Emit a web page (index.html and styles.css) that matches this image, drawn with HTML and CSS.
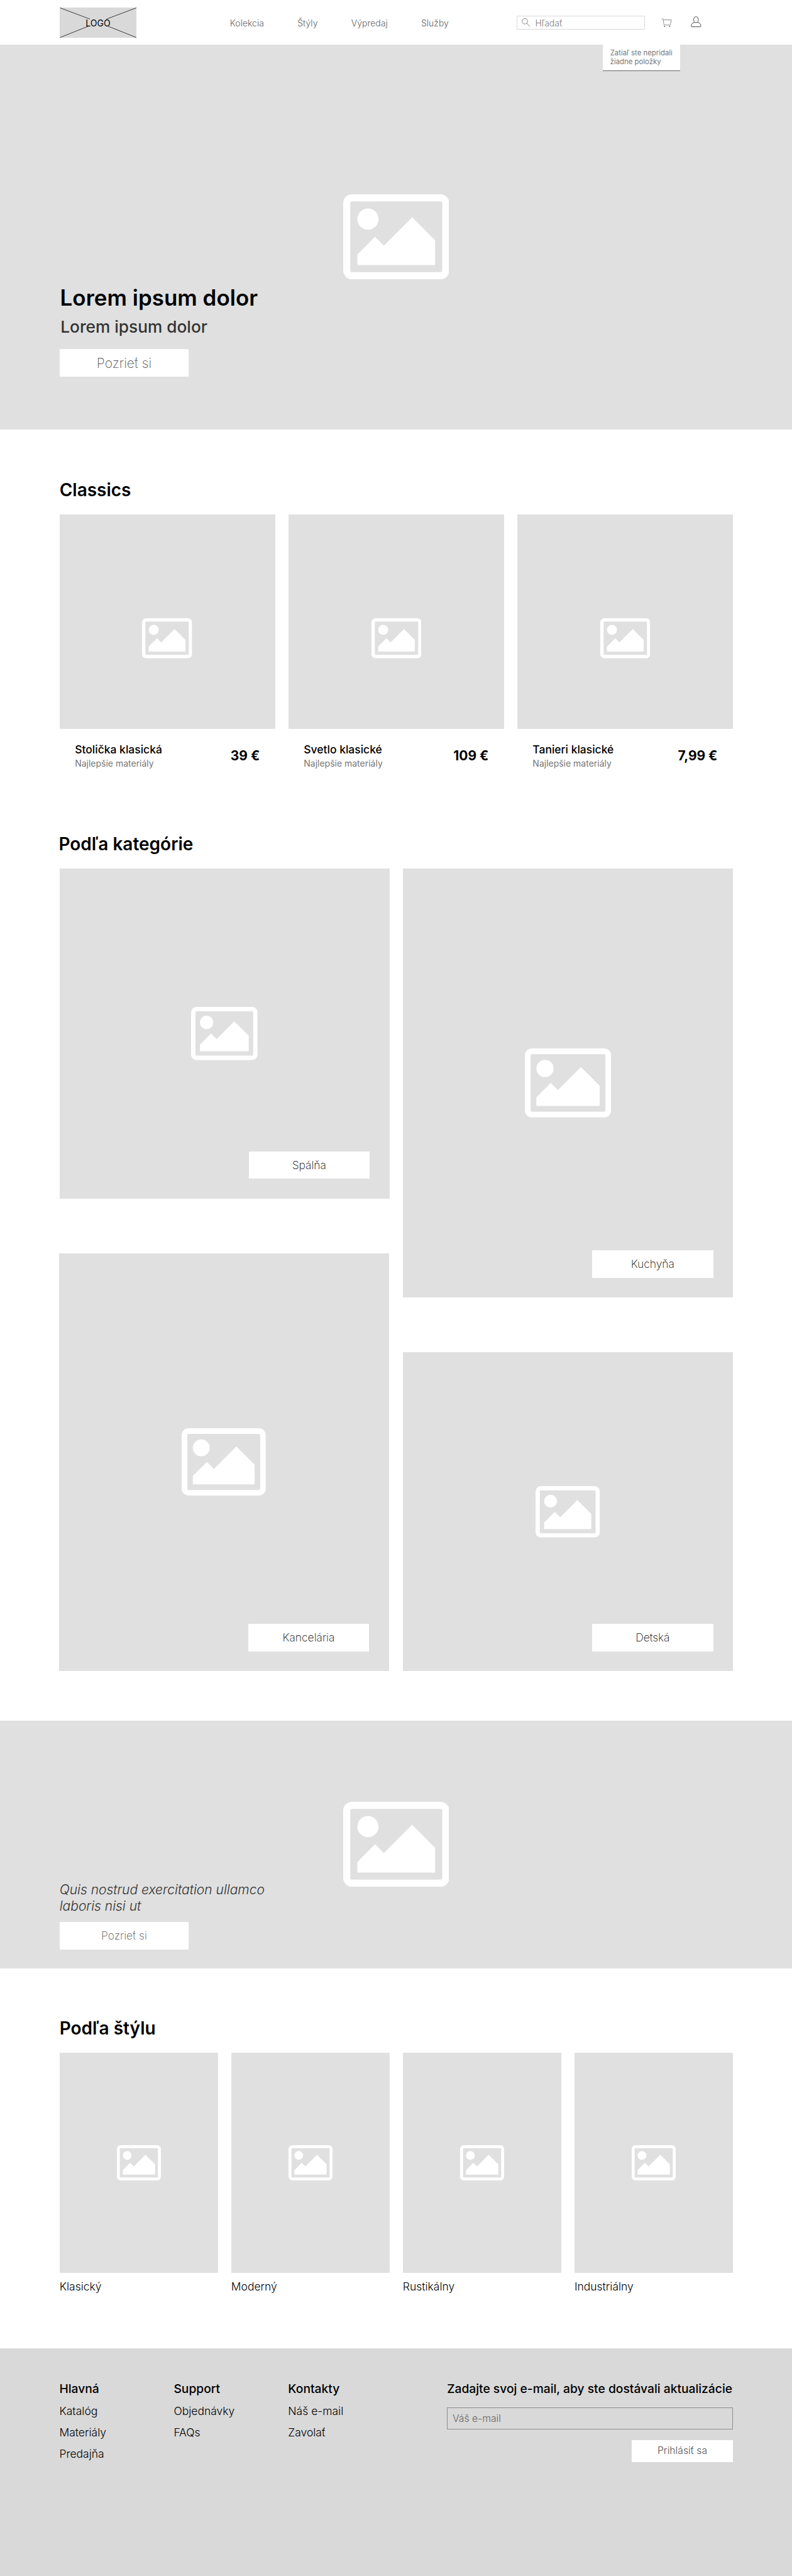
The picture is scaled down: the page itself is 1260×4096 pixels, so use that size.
FILE: index.html
```html
<!DOCTYPE html>
<html lang="sk">
<head>
<meta charset="utf-8">
<title>Lorem ipsum dolor</title>
<link rel="stylesheet" href="styles.css">
</head>
<body>
<svg class="sprite" aria-hidden="true">
  <symbol id="picture" viewBox="0 0 1920 1536">
    <path d="M640 448a192 192 0 1 1-384 0a192 192 0 1 1 384 0zM1664 832v448H256v-192l320-320l160 160l512-512z"/>
    <path fill-rule="evenodd" d="M160 0H1760a160 160 0 0 1 160 160V1376a160 160 0 0 1-160 160H160a160 160 0 0 1-160-160V160a160 160 0 0 1 160-160zM160 128a32 32 0 0 0-32 32V1376a32 32 0 0 0 32 32H1760a32 32 0 0 0 32-32V160a32 32 0 0 0-32-32z"/>
  </symbol>
</svg>

<header class="header">
  <a class="logo">
    <svg class="logo-lines" viewBox="0 0 140 55"><path d="M0.5 .5L55 21M139.500 .5L85 21M.5 54.500L52 34M139.500 54.500L88 34"/></svg>
    <span class="logo-text">LOGO</span>
  </a>
  <nav class="nav">
    <a>Kolekcia</a><a>Štýly</a><a>Výpredaj</a><a>Služby</a>
  </nav>
  <div class="search">
    <svg class="search-icon" viewBox="0 0 16 16"><circle cx="5.700" cy="5.500" r="5"/><path d="M9.200 9.200L15 15"/></svg>
    <span>Hľadať</span>
  </div>
  <div class="cart">
    <svg class="cart-icon" viewBox="0 0 20 17"><path d="M.5 1.300H3.200L5 12.300H16.200L18.500 3H3.600"/><circle cx="6" cy="14.800" r="1.100"/><circle cx="15.300" cy="14.800" r="1.100"/></svg>
    <div class="cart-popup">Zatiaľ ste nepridali<br>žiadne položky</div>
  </div>
  <svg class="user-icon" viewBox="0 0 20 20"><path d="M7.300 10.800C5.600 9.600 5.300 7.600 5.300 5.600C5.300 2.500 6.900.7 9.500.7S13.700 2.500 13.700 5.600C13.700 7.600 13.400 9.600 11.700 10.800C15.500 11.600 18.400 13.600 18.400 17.600Q18.400 19 17 19H2.100Q.7 19 .7 17.600C.7 13.600 3.500 11.600 7.300 10.800Q9.500 12 11.700 10.800"/></svg>
</header>

<section class="banner hero">
  <svg class="pic pic-banner"><use href="#picture"/></svg>
  <div class="banner-content">
    <h1>Lorem ipsum dolor</h1>
    <p class="lead">Lorem ipsum dolor</p>
    <a class="button button-large">Pozrieť si</a>
  </div>
</section>

<section class="section classics">
  <h2>Classics</h2>
  <div class="products">
    <article>
      <div class="product-image"><svg class="pic pic-product"><use href="#picture"/></svg></div>
      <div class="product-info"><div><h3>Stolička klasická</h3><p>Najlepšie materiály</p></div><strong>39 €</strong></div>
    </article>
    <article>
      <div class="product-image"><svg class="pic pic-product"><use href="#picture"/></svg></div>
      <div class="product-info"><div><h3>Svetlo klasické</h3><p>Najlepšie materiály</p></div><strong>109 €</strong></div>
    </article>
    <article>
      <div class="product-image"><svg class="pic pic-product"><use href="#picture"/></svg></div>
      <div class="product-info"><div><h3>Tanieri klasické</h3><p>Najlepšie materiály</p></div><strong>7,99 €</strong></div>
    </article>
  </div>
</section>

<section class="section categories">
  <h2>Podľa kategórie</h2>
  <div class="category-columns">
    <div class="category-column">
      <a class="tile bedroom"><svg class="pic"><use href="#picture"/></svg><span>Spálňa</span></a>
      <a class="tile office"><svg class="pic"><use href="#picture"/></svg><span>Kancelária</span></a>
    </div>
    <div class="category-column">
      <a class="tile kitchen"><svg class="pic"><use href="#picture"/></svg><span>Kuchyňa</span></a>
      <a class="tile kids"><svg class="pic"><use href="#picture"/></svg><span>Detská</span></a>
    </div>
  </div>
</section>

<section class="banner promo">
  <svg class="pic pic-banner"><use href="#picture"/></svg>
  <div class="banner-content">
    <p class="quote">Quis nostrud exercitation ullamco<br>laboris nisi ut</p>
    <a class="button">Pozrieť si</a>
  </div>
</section>

<section class="section styles">
  <h2>Podľa štýlu</h2>
  <div class="style-grid">
    <a><span class="style-image"><svg class="pic pic-style"><use href="#picture"/></svg></span>Klasický</a>
    <a><span class="style-image"><svg class="pic pic-style"><use href="#picture"/></svg></span>Moderný</a>
    <a><span class="style-image"><svg class="pic pic-style"><use href="#picture"/></svg></span>Rustikálny</a>
    <a><span class="style-image"><svg class="pic pic-style"><use href="#picture"/></svg></span>Industriálny</a>
  </div>
</section>

<footer class="footer">
  <div class="footer-links">
    <div><h4>Hlavná</h4><a>Katalóg</a><a>Materiály</a><a>Predajňa</a></div>
    <div><h4>Support</h4><a>Objednávky</a><a>FAQs</a></div>
    <div><h4>Kontakty</h4><a>Náš e-mail</a><a>Zavolať</a></div>
  </div>
  <form class="newsletter">
    <h4>Zadajte svoj e-mail, aby ste dostávali aktualizácie</h4>
    <div class="email">Váš e-mail</div>
    <div class="submit">Prihlásiť sa</div>
  </form>
</footer>
</body>
</html>
```
FILE: styles.css
```css
* { box-sizing: border-box; margin: 0; }

/* 1rem is ten design pixels */
html { font-size: 8.747px; background: #fff; }

body {
  display: flex;
  flex-direction: column;
  height: 4096px;
  font-family: Inter, "Liberation Sans", sans-serif;
  font-size: 1.6rem;
  color: #000;
}
body > * { flex: none; }

.sprite { display: none; }
.pic { display: block; fill: #fff; aspect-ratio: 5 / 4; }

/* Header */
.header {
  display: grid;
  grid-template-columns: 14rem 17rem 52.2rem 23.3rem 2.9rem 2rem 3.4rem 2rem;
  align-items: center;
  height: 8.1rem;
  padding: .2rem 0 0 10.83rem;
  font-size: 1.6rem;
  font-weight: 300;
  line-height: 2rem;
}
.logo {
  display: grid;
  place-items: center;
  width: 14rem;
  height: 5.5rem;
  background: #d9d9d9;
}
.logo > * { grid-area: 1 / 1; }
.logo-lines { width: 14rem; height: 5.5rem; fill: none; stroke: #222; }
.logo-text { font-weight: 400; }
.nav { grid-column: 3; display: flex; gap: 6.1rem; color: #666; }
.search {
  grid-column: 4;
  display: flex;
  align-items: center;
  gap: .9rem;
  height: 2.5rem;
  padding-left: .7rem;
  border: 1px solid #d9d9d9;
  color: #808080;
}
.search-icon { width: 1.6rem; height: 1.6rem; fill: none; stroke: #777; }
.cart { grid-column: 6; position: relative; }
.cart-icon { display: block; width: 2rem; height: 1.7rem; fill: none; stroke: #808080; }
.cart-icon circle { fill: #666; stroke: none; }
.cart-popup {
  position: absolute;
  top: 4.75rem;
  left: -10.6rem;
  width: 14.1rem;
  height: 4.9rem;
  padding: .8rem 0 0 1.35rem;
  border-bottom: 1px solid #666;
  background: #fff;
  color: #777;
  font-size: 1.3rem;
  font-weight: 400;
  line-height: 1.6rem;
  white-space: nowrap;
}
.user-icon { grid-column: 8; width: 2rem; height: 2rem; margin-top: -.3rem; fill: none; stroke: #333; }

/* Full-width banners */
.banner { display: grid; background: #e0e0e0; }
.banner > * { grid-area: 1 / 1; }
.pic-banner { width: 19.3rem; place-self: center; }
.banner-content { align-self: end; padding-left: 10.83rem; }
.hero { height: 70rem; }
.hero .banner-content { padding-bottom: 9.6rem; }
h1 { margin-left: .1rem; font-size: 4rem; font-weight: 600; line-height: 4.8rem; }
.lead {
  margin: 1.1rem 0 2.3rem .17rem;
  font-size: 3rem;
  font-weight: 500;
  line-height: 3.6rem;
  color: #333;
}
.button {
  display: flex;
  align-items: center;
  justify-content: center;
  width: 23.5rem;
  height: 5rem;
  background: #fff;
  color: #555;
  font-size: 2rem;
  font-weight: 200;
}
.button-large { font-size: 2.4rem; }
.promo { height: 45rem; }
.promo .banner-content { padding-bottom: 3.4rem; }
.quote {
  margin-bottom: 1.5rem;
  font-size: 2.4rem;
  font-style: italic;
  font-weight: 300;
  line-height: 2.9rem;
  color: #333;
}

/* Sections */
.section { padding: 9rem 10.75rem 0 10.83rem; }
h2 { margin-bottom: 2.5rem; font-size: 3.2rem; font-weight: 600; line-height: 3.9rem; }

.products { display: grid; grid-template-columns: repeat(3, 1fr); gap: 2.4rem; }
.product-image {
  display: grid;
  place-items: center;
  height: 39rem;
  padding-top: 6.1rem;
  background: #e0e0e0;
}
.pic-product { width: 9.1rem; }
.product-info {
  display: flex;
  align-items: center;
  justify-content: space-between;
  height: 9.8rem;
  padding: 0 2.8rem;
}
h3 { margin-bottom: .4rem; font-size: 2rem; font-weight: 500; line-height: 2.4rem; }
.product-info p { font-size: 1.6rem; font-weight: 400; line-height: 2rem; color: #777; }
.product-info strong { font-size: 2.4rem; font-weight: 700; line-height: 2.9rem; }

.categories { padding-top: 9.2rem; padding-bottom: 9rem; }
.categories h2 { margin-left: -.15rem; }
.category-columns { display: flex; justify-content: space-between; }
.category-column { display: flex; flex-direction: column; gap: 9.9rem; }
.tile { display: grid; width: 60rem; background: #e0e0e0; }
.tile > * { grid-area: 1 / 1; }
.tile .pic { place-self: center; }
.tile span {
  place-self: end;
  width: 22rem;
  height: 5rem;
  margin: 0 3.6rem 3.6rem 0;
  background: #fff;
  font-size: 2rem;
  font-weight: 200;
  line-height: 5rem;
  text-align: center;
}
.bedroom { height: 60rem; }
.bedroom .pic { width: 12.1rem; }
.office { height: 76rem; margin-left: -.1rem; }
.office .pic { width: 15.3rem; }
.kitchen { height: 78rem; }
.kitchen .pic { width: 15.7rem; }
.kids { height: 58rem; }
.kids .pic { width: 11.7rem; }

.styles { padding-bottom: 10.1rem; }
.style-grid { display: grid; grid-template-columns: repeat(4, 1fr); gap: 2.4rem; }
.style-grid a { font-size: 2rem; font-weight: 300; line-height: 2.4rem; }
.style-image {
  display: grid;
  place-items: center;
  height: 40rem;
  margin-bottom: 1.2rem;
  background: #e0e0e0;
}
.pic-style { width: 8rem; }

/* Footer */
.footer {
  flex: 1 0 0;
  display: flex;
  justify-content: space-between;
  padding: 6.1rem 10.75rem 0 10.8rem;
  background: #d9d9d9;
}
.footer-links { display: grid; grid-template-columns: repeat(3, 20.8rem); }
.footer-links > div { display: flex; flex-direction: column; gap: 1.5rem; }
.footer-links a { font-size: 2rem; font-weight: 300; line-height: 2.4rem; }
h4 { font-size: 2.2rem; font-weight: 500; line-height: 2.6rem; white-space: nowrap; }
.newsletter { display: flex; flex-direction: column; gap: 2rem; width: 52rem; }
.email {
  height: 4rem;
  padding-left: .9rem;
  border: 1px solid #8c8c8c;
  color: #666;
  font-size: 1.8rem;
  font-weight: 300;
  line-height: 3.8rem;
}
.submit {
  align-self: flex-end;
  width: 18.4rem;
  height: 4rem;
  background: #fff;
  color: #555;
  font-size: 1.8rem;
  font-weight: 300;
  line-height: 4rem;
  text-align: center;
}
```
